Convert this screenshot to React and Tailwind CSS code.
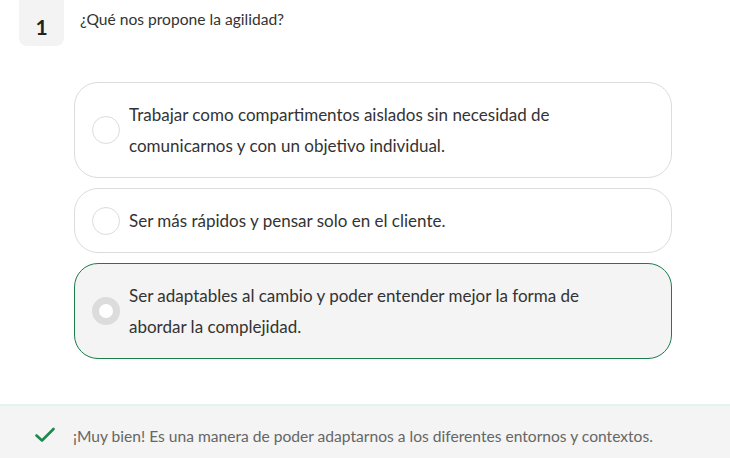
import React from 'react';

const options = [
  {
    text: 'Trabajar como compartimentos aislados sin necesidad de comunicarnos y con un objetivo individual.',
    selected: false,
  },
  { text: 'Ser más rápidos y pensar solo en el cliente.', selected: false },
  {
    text: 'Ser adaptables al cambio y poder entender mejor la forma de abordar la complejidad.',
    selected: true,
  },
];

const App = () => {
  return (
    <div className="w-[730px] h-[458px] overflow-hidden bg-white text-[#333] font-['Source_Sans_Pro','Lato','Liberation_Sans',sans-serif] flex flex-col">
      <div className="flex items-start pl-[19px]">
        <div className="w-[45px] h-[46px] bg-[#f3f3f3] rounded-b-[8px] flex items-center justify-center text-[21px] font-bold text-[#222] pt-[8px]">
          1
        </div>
        <div className="ml-[16px] mt-[9px] text-[15.6px] leading-[20px] text-[#333]">¿Qué nos propone la agilidad?</div>
      </div>

      <div className="flex flex-col gap-[10px] ml-[74px] mt-[36px] w-[598px]">
        {options.map((opt, i) => (
          <div
            key={i}
            className={
              opt.selected
                ? 'flex items-center rounded-[24px] border border-[#1b7d4a] bg-[#f4f4f4] pl-[17px] pr-[24px] py-[16px]'
                : 'flex items-center rounded-[24px] border border-[#dcdcdc] bg-white pl-[17px] pr-[24px] py-[16px]'
            }
          >
            {opt.selected ? (
              <div className="w-[28px] h-[28px] shrink-0 rounded-full border-[7px] border-[#dcdcdc] bg-white" />
            ) : (
              <div className="w-[28px] h-[28px] shrink-0 rounded-full border border-[#dcdcdc] bg-white" />
            )}
            <div className="ml-[9px] text-[17px] leading-[31px] text-[#333] max-w-[460px]">{opt.text}</div>
          </div>
        ))}
      </div>

      <div className="mt-auto h-[54px] bg-[#f4f4f4] border-t-2 border-[#e3f5ea] flex items-center pl-[35px] pt-[10px]">
        <svg width="20" height="16" viewBox="0 0 20 16" fill="none" className="mb-[4px]">
          <path d="M1.5 8.5 L7 13.5 L18.5 2" stroke="#1b8a4c" strokeWidth="2.6" strokeLinecap="round" strokeLinejoin="round" />
        </svg>
        <div className="ml-[18px] text-[15.6px] text-[#666]">
          ¡Muy bien! Es una manera de poder adaptarnos a los diferentes entornos y contextos.
        </div>
      </div>
    </div>
  );
};

export default App;
